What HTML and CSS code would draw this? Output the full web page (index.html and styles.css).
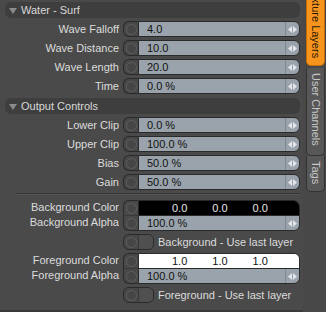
FILE: index.html
```html
<!DOCTYPE html>
<html lang="en">
<head>
    <meta charset="UTF-8">
    <title>Water - Surf</title>
    <link rel="stylesheet" href="styles.css">
</head>
<body>
    <div class="frame">
        <div class="panel">
            <!-- Water - Surf -->
            <div class="section-head"><span class="tri"></span>Water - Surf</div>

            <div class="row">
                <label>Wave Falloff</label>
                <div class="knob"><span class="dot"></span></div>
                <div class="field"><span class="val">4.0</span><span class="spin"><svg width="9" height="9" viewBox="0 0 9 9"><polygon points="0,4.5 4,1 4,8"/><polygon points="9,4.5 5,1 5,8"/></svg></span></div>
            </div>
            <div class="row">
                <label>Wave Distance</label>
                <div class="knob"><span class="dot"></span></div>
                <div class="field"><span class="val">10.0</span><span class="spin"><svg width="9" height="9" viewBox="0 0 9 9"><polygon points="0,4.5 4,1 4,8"/><polygon points="9,4.5 5,1 5,8"/></svg></span></div>
            </div>
            <div class="row">
                <label>Wave Length</label>
                <div class="knob"><span class="dot"></span></div>
                <div class="field"><span class="val">20.0</span><span class="spin"><svg width="9" height="9" viewBox="0 0 9 9"><polygon points="0,4.5 4,1 4,8"/><polygon points="9,4.5 5,1 5,8"/></svg></span></div>
            </div>
            <div class="row">
                <label>Time</label>
                <div class="knob"><span class="dot"></span></div>
                <div class="field"><span class="val">0.0 %</span><span class="spin"><svg width="9" height="9" viewBox="0 0 9 9"><polygon points="0,4.5 4,1 4,8"/><polygon points="9,4.5 5,1 5,8"/></svg></span></div>
            </div>

            <!-- Output Controls -->
            <div class="section-head"><span class="tri"></span>Output Controls</div>

            <div class="row">
                <label>Lower Clip</label>
                <div class="knob"><span class="dot"></span></div>
                <div class="field"><span class="val">0.0 %</span><span class="spin"><svg width="9" height="9" viewBox="0 0 9 9"><polygon points="0,4.5 4,1 4,8"/><polygon points="9,4.5 5,1 5,8"/></svg></span></div>
            </div>
            <div class="row">
                <label>Upper Clip</label>
                <div class="knob"><span class="dot"></span></div>
                <div class="field"><span class="val">100.0 %</span><span class="spin"><svg width="9" height="9" viewBox="0 0 9 9"><polygon points="0,4.5 4,1 4,8"/><polygon points="9,4.5 5,1 5,8"/></svg></span></div>
            </div>
            <div class="row">
                <label>Bias</label>
                <div class="knob"><span class="dot"></span></div>
                <div class="field"><span class="val">50.0 %</span><span class="spin"><svg width="9" height="9" viewBox="0 0 9 9"><polygon points="0,4.5 4,1 4,8"/><polygon points="9,4.5 5,1 5,8"/></svg></span></div>
            </div>
            <div class="row">
                <label>Gain</label>
                <div class="knob"><span class="dot"></span></div>
                <div class="field"><span class="val">50.0 %</span><span class="spin"><svg width="9" height="9" viewBox="0 0 9 9"><polygon points="0,4.5 4,1 4,8"/><polygon points="9,4.5 5,1 5,8"/></svg></span></div>
            </div>

            <div class="divider"></div>

            <!-- Background -->
            <div class="color-group">
                <div class="labels">
                    <label>Background Color</label>
                    <label>Background Alpha</label>
                </div>
                <div class="knobs">
                    <div class="knob-cell"><span class="dot"></span></div>
                    <div class="knob-cell"><span class="dot"></span></div>
                </div>
                <div class="fields">
                    <div class="swatch dark"><span>0.0</span><span>0.0</span><span>0.0</span></div>
                    <div class="alpha"><span class="val">100.0 %</span><span class="spin"><svg width="9" height="9" viewBox="0 0 9 9"><polygon points="0,4.5 4,1 4,8"/><polygon points="9,4.5 5,1 5,8"/></svg></span></div>
                </div>
            </div>
            <div class="check-row">
                <div class="check"><span class="check-knob"><span class="dot"></span></span><span class="check-box"></span></div>
                <span class="check-label">Background - Use last layer</span>
            </div>

            <!-- Foreground -->
            <div class="color-group">
                <div class="labels">
                    <label>Foreground Color</label>
                    <label>Foreground Alpha</label>
                </div>
                <div class="knobs">
                    <div class="knob-cell"><span class="dot"></span></div>
                    <div class="knob-cell"><span class="dot"></span></div>
                </div>
                <div class="fields">
                    <div class="swatch light"><span>1.0</span><span>1.0</span><span>1.0</span></div>
                    <div class="alpha"><span class="val">100.0 %</span><span class="spin"><svg width="9" height="9" viewBox="0 0 9 9"><polygon points="0,4.5 4,1 4,8"/><polygon points="9,4.5 5,1 5,8"/></svg></span></div>
                </div>
            </div>
            <div class="check-row">
                <div class="check"><span class="check-knob"><span class="dot"></span></span><span class="check-box"></span></div>
                <span class="check-label">Foreground - Use last layer</span>
            </div>
        </div>

        <div class="tabs">
            <div class="tab active"><span>Texture Layers</span></div>
            <div class="tab channels"><span>User Channels</span></div>
            <div class="tab tags"><span>Tags</span></div>
        </div>
    </div>
</body>
</html>
```

FILE: styles.css
```css
body {
    margin: 0;
    background-color: #3a3a3a;
    font-family: "Liberation Sans", Arial, sans-serif;
    font-size: 11px;
    color: #dcdcdc;
}

.frame {
    display: flex;
    width: 326px;
    height: 312px;
    overflow: hidden;
}

.panel {
    width: 303px;
    height: 310px;
    background-color: #4a4a4a;
    padding-top: 2px;
    box-sizing: border-box;
}

.section-head {
    display: flex;
    align-items: center;
    height: 16px;
    margin: 0 3px 3px 5px;
    padding-left: 4px;
    border-radius: 6px;
    background-color: #3e3e3e;
    color: #d8d8d8;
}

.row + .section-head {
    margin-top: 4px;
}

.tri {
    width: 0;
    height: 0;
    border-left: 4px solid transparent;
    border-right: 4px solid transparent;
    border-top: 6px solid #8a8a8a;
    margin-right: 4px;
    margin-top: 1px;
}

.row {
    display: grid;
    grid-template-columns: 123px 15px 162px;
    height: 16px;
    margin-bottom: 3px;
}

label {
    display: block;
    text-align: right;
    padding-right: 4px;
    line-height: 16px;
    color: #dcdcdc;
}

.knob {
    display: flex;
    align-items: center;
    justify-content: center;
    border: 1px solid #2a2a2a;
    border-right: none;
    border-radius: 6px 0 0 6px;
    background-color: #484848;
}

.dot {
    display: block;
    width: 9px;
    height: 9px;
    border-radius: 50%;
    border: 1px solid #5e5e5e;
    background-color: #464646;
}

.field {
    display: flex;
    background-color: #9aa3ab;
    border: 1px solid #2a2a2a;
    border-radius: 0 6px 6px 0;
    color: #111;
}

.val {
    flex: 1;
    padding-left: 8px;
    line-height: 14px;
}

.spin {
    width: 13px;
    display: flex;
    align-items: center;
    justify-content: center;
    border-left: 1px solid #7f8790;
}

.spin svg {
    fill: #e2e6ea;
}

.divider {
    height: 1px;
    margin: 3px 3px 5px 16px;
    background-color: #343434;
    border-bottom: 1px solid #555;
}

.color-group {
    display: grid;
    grid-template-columns: 123px 15px 162px;
    height: 31px;
}

.labels label {
    line-height: 15px;
}

.knobs {
    border: 1px solid #2a2a2a;
    border-right: none;
    border-radius: 6px 0 0 6px;
    background-color: #484848;
}

.knob-cell {
    height: 14px;
    display: flex;
    align-items: center;
    justify-content: center;
}

.knob-cell + .knob-cell {
    border-top: 1px solid #3a3a3a;
}

.fields {
    border: 1px solid #2a2a2a;
    border-radius: 0 6px 6px 0;
    overflow: hidden;
    background-color: #9aa3ab;
    color: #111;
}

.swatch {
    display: flex;
    height: 14px;
    line-height: 14px;
    padding-left: 33px;
    gap: 25px;
}

.swatch.dark {
    background-color: #000;
    color: #e8e8e8;
}

.swatch.light {
    background-color: #fff;
    color: #111;
}

.alpha {
    display: flex;
    height: 15px;
    border-top: 1px solid #2a2a2a;
    box-sizing: border-box;
}

.alpha .val {
    line-height: 14px;
}

.check-row {
    display: flex;
    align-items: center;
    height: 16px;
    margin: 3px 0 3px 123px;
}

.check {
    display: flex;
    width: 31px;
    height: 16px;
    box-sizing: border-box;
    border: 1px solid #2a2a2a;
    border-radius: 6px;
    background-color: #484848;
    overflow: hidden;
}

.check-knob {
    width: 14px;
    display: flex;
    align-items: center;
    justify-content: center;
}

.check-box {
    flex: 1;
    border-left: 1px solid #3a3a3a;
    background-color: #4f4f4f;
}

.check-label {
    margin-left: 4px;
    color: #dcdcdc;
}

.tabs {
    flex: 1;
    padding-left: 3px;
    background-color: #484848;
}

.tab {
    width: 19px;
    box-sizing: border-box;
    overflow: hidden;
    display: flex;
    justify-content: center;
    border: 1px solid #333;
    border-top: none;
    border-radius: 0 0 5px 5px;
    background-color: #575757;
    color: #c8c8c8;
}

.tab span {
    writing-mode: vertical-rl;
    white-space: nowrap;
    line-height: 17px;
}

.tab.active {
    height: 66px;
    align-items: flex-end;
    padding-bottom: 7px;
    background-color: #f7941d;
    border-color: #c46d05;
    color: #2a1a05;
}

.tab.channels {
    height: 88px;
    margin-top: 2px;
    padding-top: 5px;
}

.tab.tags {
    height: 36px;
    padding-top: 5px;
}
```
